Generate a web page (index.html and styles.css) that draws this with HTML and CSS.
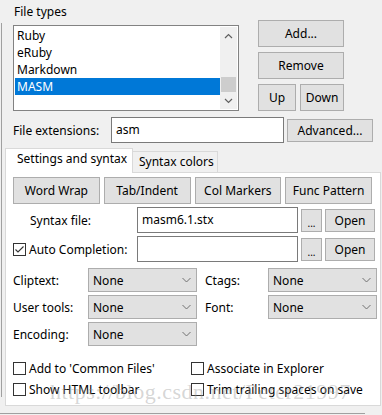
FILE: index.html
```html
<!DOCTYPE html>
<html>

<head>
  <meta charset="UTF-8" />
  <title>File types</title>

  <link rel="stylesheet" href="styles.css">
</head>

<body>
  <div class="page">
    <div class="edge"></div>
    <div class="main">
      <div class="types-label">File types</div>
      <div class="types-row">
        <div class="listbox">
          <div class="list-items">
            <div class="list-item">Ruby</div>
            <div class="list-item">eRuby</div>
            <div class="list-item">Markdown</div>
            <div class="list-item selected">MASM</div>
          </div>
          <div class="scrollbar">
            <div class="scroll-arrow">
              <svg width="9" height="6" viewBox="0 0 9 6"><polyline points="1,5 4.5,1.5 8,5" /></svg>
            </div>
            <div class="scroll-track">
              <div class="scroll-thumb"></div>
            </div>
            <div class="scroll-arrow">
              <svg width="9" height="6" viewBox="0 0 9 6"><polyline points="1,1 4.5,4.5 8,1" /></svg>
            </div>
          </div>
        </div>
        <div class="list-buttons">
          <button class="btn">Add...</button>
          <button class="btn">Remove</button>
          <div class="btn-pair">
            <button class="btn btn-up">Up</button>
            <button class="btn btn-down">Down</button>
          </div>
        </div>
      </div>

      <div class="ext-row">
        <div class="ext-label">File extensions:</div>
        <div class="textbox ext-input">asm</div>
        <button class="btn btn-advanced">Advanced...</button>
      </div>

      <div class="tabs">
        <div class="tab active">Settings and syntax</div>
        <div class="tab">Syntax colors</div>
      </div>

      <div class="panel">
        <div class="tool-buttons">
          <button class="btn">Word Wrap</button>
          <button class="btn">Tab/Indent</button>
          <button class="btn">Col Markers</button>
          <button class="btn">Func Pattern</button>
        </div>

        <div class="file-row">
          <div class="file-label syntax-label">Syntax file:</div>
          <div class="textbox file-input">masm6.1.stx</div>
          <button class="btn btn-dots">...</button>
          <button class="btn btn-open">Open</button>
        </div>
        <div class="file-row">
          <div class="file-label check">
            <span class="checkbox">
              <svg width="11" height="11" viewBox="0 0 11 11"><polyline points="1.5,5.5 4,8 9.5,2.5" /></svg>
            </span>
            Auto Completion:
          </div>
          <div class="textbox file-input"></div>
          <button class="btn btn-dots">...</button>
          <button class="btn btn-open">Open</button>
        </div>

        <div class="option-grid">
          <div class="option-label">Cliptext:</div>
          <div class="select">None<svg width="9" height="6" viewBox="0 0 9 6"><polyline points="0.5,1 4.5,5 8.5,1" /></svg></div>
          <div class="option-label second">Ctags:</div>
          <div class="select">None<svg width="9" height="6" viewBox="0 0 9 6"><polyline points="0.5,1 4.5,5 8.5,1" /></svg></div>

          <div class="option-label">User tools:</div>
          <div class="select">None<svg width="9" height="6" viewBox="0 0 9 6"><polyline points="0.5,1 4.5,5 8.5,1" /></svg></div>
          <div class="option-label second">Font:</div>
          <div class="select">None<svg width="9" height="6" viewBox="0 0 9 6"><polyline points="0.5,1 4.5,5 8.5,1" /></svg></div>

          <div class="option-label">Encoding:</div>
          <div class="select">None<svg width="9" height="6" viewBox="0 0 9 6"><polyline points="0.5,1 4.5,5 8.5,1" /></svg></div>
        </div>

        <div class="check-grid">
          <div class="check"><span class="checkbox"></span>Add to 'Common Files'</div>
          <div class="check"><span class="checkbox"></span>Associate in Explorer</div>
          <div class="check"><span class="checkbox"></span>Show HTML toolbar</div>
          <div class="check"><span class="checkbox"></span>Trim trailing spaces on save</div>
        </div>
      </div>
    </div>
  </div>
  <div class="bottom-line"></div>

  <div class="watermark">https://blog.csdn.net/Peter21997</div>
</body>

</html>
```

FILE: styles.css
```css
body {
  margin: 0;
  width: 382px;
  height: 415px;
  overflow: hidden;
  position: relative;
  background: #f0f0f0;
  color: #000;
  font-family: "Noto Sans", "Liberation Sans", sans-serif;
  font-size: 12px;
}

.page {
  display: flex;
  padding-left: 1px;
}

.edge {
  width: 1px;
  height: 374px;
  margin-top: 23px;
  background: #a0a0a0;
}

.main {
  flex: 1;
  padding-left: 3px;
}

/* file types list */
.types-label {
  margin: 4px 0 0 9px;
  line-height: 16px;
}

.types-row {
  display: flex;
  gap: 19px;
  margin-left: 8px;
}

.listbox {
  display: flex;
  width: 226px;
  height: 86px;
  margin-top: 5px;
  padding: 1px;
  box-sizing: border-box;
  border: 1px solid #828282;
  background: #fff;
}

.list-items {
  flex: 1;
}

.list-item {
  height: 17px;
  line-height: 17px;
  padding-left: 2px;
}

.list-item.selected {
  background: #0078d7;
  color: #fff;
}

.scrollbar {
  display: flex;
  flex-direction: column;
  width: 17px;
  background: #f0f0f0;
}

.scroll-arrow {
  display: flex;
  align-items: center;
  justify-content: center;
  height: 17px;
}

.scroll-arrow polyline,
.select polyline {
  fill: none;
  stroke: #606060;
  stroke-width: 1.2;
}

.scroll-track {
  flex: 1;
  display: flex;
  flex-direction: column;
  justify-content: flex-end;
}

.scroll-thumb {
  height: 15px;
  margin: 0 1px;
  background: #cdcdcd;
}

.list-buttons {
  display: flex;
  flex-direction: column;
  gap: 5px;
  width: 86px;
}

.btn {
  height: 27px;
  padding: 0;
  box-sizing: border-box;
  border: 1px solid #adadad;
  background: #e1e1e1;
  color: #000;
  font: inherit;
}

.btn-pair {
  display: flex;
  gap: 4px;
}

.btn-up {
  width: 38px;
}

.btn-down {
  width: 44px;
}

/* extensions */
.ext-row {
  display: flex;
  align-items: center;
  height: 26px;
  margin: 6px 0 0 8px;
}

.ext-label {
  width: 98px;
}

.textbox {
  height: 26px;
  padding-left: 4px;
  box-sizing: border-box;
  border: 1px solid #7a7a7a;
  background: #fff;
  line-height: 24px;
}

.ext-input {
  width: 173px;
}

.btn-advanced {
  width: 86px;
  height: 23px;
  margin-left: 3px;
}

/* tabs */
.tabs {
  display: flex;
  align-items: flex-end;
  height: 24px;
  margin-top: 5px;
}

.tab {
  height: 21px;
  width: 85px;
  padding-left: 6px;
  box-sizing: border-box;
  border: 1px solid #d9d9d9;
  border-left: 0;
  border-bottom: 0;
  line-height: 19px;
}

.tab.active {
  position: relative;
  z-index: 1;
  width: 128px;
  height: 25px;
  margin-bottom: -1px;
  padding-left: 11px;
  border-left: 1px solid #d9d9d9;
  background: #fff;
  line-height: 20px;
}

.panel {
  width: 376px;
  height: 234px;
  padding: 4px 0 0 7px;
  box-sizing: border-box;
  border: 1px solid #d9d9d9;
  background: #fff;
}

.tool-buttons {
  display: grid;
  grid-template-columns: repeat(4, 1fr);
  gap: 4px;
  width: 359px;
}

.file-row {
  display: flex;
  align-items: center;
  height: 26px;
  margin-top: 3px;
}

.file-label {
  width: 124px;
}

.syntax-label {
  padding-left: 17px;
  box-sizing: border-box;
}

.file-input {
  width: 161px;
}

.btn-dots {
  width: 21px;
  height: 23px;
  margin-left: 3px;
  line-height: 26px;
  font-size: 10px;
}

.btn-open {
  width: 50px;
  height: 23px;
  margin-left: 3px;
}

.option-grid {
  display: grid;
  grid-template-columns: 75px 109px 71px 109px;
  grid-auto-rows: 24px;
  row-gap: 3px;
  align-items: center;
  margin-top: 6px;
}

.option-label.second {
  padding-left: 8px;
}

.select {
  display: flex;
  align-items: center;
  justify-content: space-between;
  height: 24px;
  padding: 0 5px 0 4px;
  box-sizing: border-box;
  border: 1px solid #adadad;
  background: #e1e1e1;
}

.select polyline {
  stroke: #707070;
  stroke-width: 1;
}

.check-grid {
  display: grid;
  grid-template-columns: 178px 1fr;
  grid-auto-rows: 21px;
  align-items: center;
  margin-top: 12px;
}

.check {
  display: flex;
  align-items: center;
  gap: 3px;
}

.checkbox {
  display: flex;
  align-items: center;
  justify-content: center;
  width: 13px;
  height: 13px;
  box-sizing: border-box;
  border: 1px solid #333;
  background: #fff;
}

.checkbox polyline {
  fill: none;
  stroke: #333;
  stroke-width: 1.1;
}

.bottom-line {
  width: 365px;
  height: 1px;
  margin-top: 7px;
  background: #a0a0a0;
}

.watermark {
  position: absolute;
  left: 50px;
  top: 379px;
  color: rgba(150, 150, 150, 0.4);
  font-family: "Liberation Serif", serif;
  font-size: 22px;
  letter-spacing: 0.5px;
  white-space: nowrap;
  pointer-events: none;
}
```
